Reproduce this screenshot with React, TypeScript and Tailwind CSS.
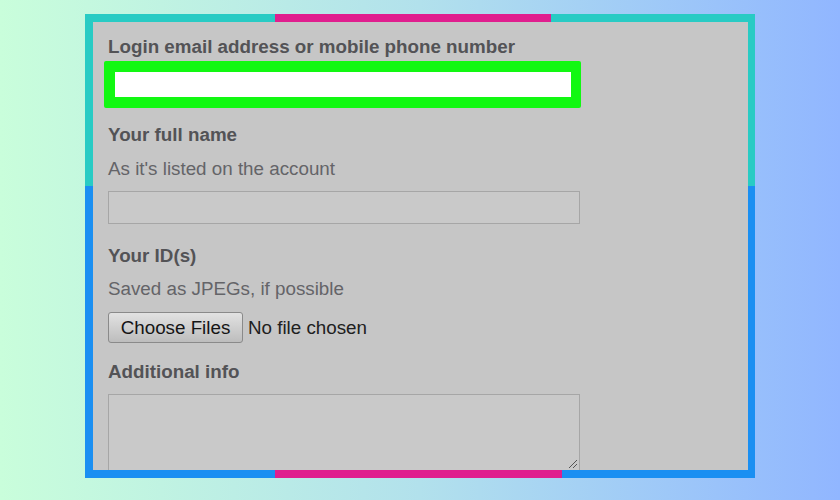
import React from "react";

const font = { fontFamily: '"Liberation Sans", Arial, sans-serif' };

export default function App() {
  return (
    <div
      className="w-[840px] h-[500px] overflow-hidden bg-linear-to-r from-[#c9fedb] via-[#b2e1ec] to-[#91b6ff] pt-[14px] pl-[85px]"
      style={font}
    >
      <div className="w-[670px] h-[464px] flex flex-col">
        {/* top stripe */}
        <div className="h-[8px] flex shrink-0">
          <div className="w-[190px] bg-[#28cbc4]" />
          <div className="w-[276px] bg-[#e01e8e]" />
          <div className="flex-1 bg-[#28cbc4]" />
        </div>
        <div className="flex-1 flex min-h-0">
          <div className="w-[8px] flex flex-col shrink-0">
            <div className="h-[164px] bg-[#28cbc4]" />
            <div className="flex-1 bg-[#1a8ff2]" />
          </div>
          <div className="flex-1 bg-[#c6c6c6] overflow-hidden pl-[15px] pt-[14px] text-[18.8px] leading-[21px]">
            <div className="font-bold text-[#535356]">
              Login email address or mobile phone number
            </div>
            <div className="mt-[4px] -ml-[4px] w-[477px] h-[47px] bg-[#12f812] p-[11px] pr-[10px] rounded-[2px]">
              <div className="w-full h-full bg-white" />
            </div>
            <div className="mt-[16px] font-bold text-[#535356]">Your full name</div>
            <div className="mt-[13px] text-[#646468]">As it's listed on the account</div>
            <div className="mt-[12px] w-[472px] h-[33px] border border-[#a6a6a6] bg-[#c9c9c9]" />
            <div className="mt-[21px] font-bold text-[#535356]">Your ID(s)</div>
            <div className="mt-[12px] text-[#646468]">Saved as JPEGs, if possible</div>
            <div className="mt-[13px] flex items-center">
              <div className="w-[135px] h-[31px] rounded-[3px] border border-[#8a8a8a] bg-linear-to-b from-[#e2e2e2] to-[#bdbdbd] flex items-center justify-center text-[#151515]">
                Choose Files
              </div>
              <div className="ml-[5px] text-[#202020]">No file chosen</div>
            </div>
            <div className="mt-[18px] font-bold text-[#535356]">Additional info</div>
            <div className="mt-[12px] relative w-[472px] h-[78px] border border-[#a6a6a6] bg-[#c9c9c9]">
              <svg
                className="absolute right-[1px] bottom-[2px]"
                width="10"
                height="10"
                viewBox="0 0 10 10"
              >
                <line x1="1" y1="9" x2="9" y2="1" stroke="#555" strokeWidth="1" />
                <line x1="5" y1="9" x2="9" y2="5" stroke="#555" strokeWidth="1" />
              </svg>
            </div>
          </div>
          <div className="w-[7px] flex flex-col shrink-0">
            <div className="h-[164px] bg-[#28cbc4]" />
            <div className="flex-1 bg-[#1a8ff2]" />
          </div>
        </div>
        {/* bottom stripe */}
        <div className="h-[8px] flex shrink-0">
          <div className="w-[190px] bg-[#1a8ff2]" />
          <div className="w-[287px] bg-[#e01e8e]" />
          <div className="flex-1 bg-[#1a8ff2]" />
        </div>
      </div>
    </div>
  );
}
